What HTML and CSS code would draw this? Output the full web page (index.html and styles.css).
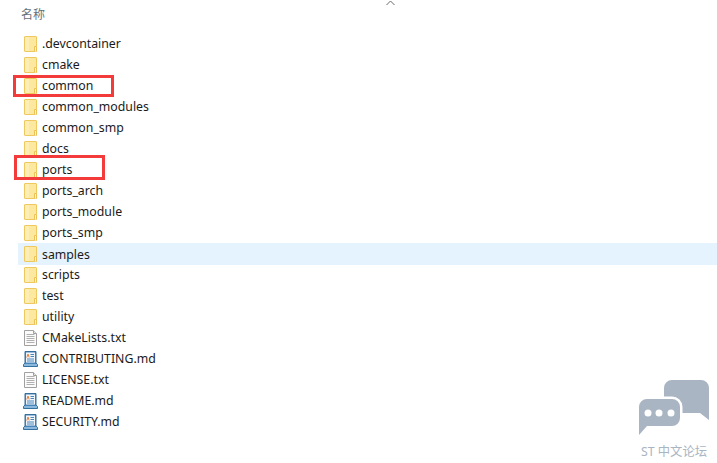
FILE: index.html
```
<!DOCTYPE html>
<html lang="zh">
<head>
<meta charset="utf-8">
<title>名称</title>
<link rel="stylesheet" href="styles.css">
</head>
<body>
<svg width="0" height="0" class="defs">
  <defs>
    <symbol id="folder" viewBox="0 0 13 16">
      <rect x=".5" y=".5" width="12" height="15" rx=".5" fill="#fde89f" stroke="#efc860"/>
      <rect x="1" y="1" width="4" height="14" fill="#fdeeb6"/>
      <path d="M10.500 15.500v-5h2v5" fill="#fff6d2" stroke="#ecc258"/>
    </symbol>
    <symbol id="txt" viewBox="0 0 13 16">
      <path d="M.5.500h9l3 3v12h-12z" fill="#fbfbfb" stroke="#a0a0a0"/>
      <path d="M9.500.500v3h3" fill="#e6e6e6" stroke="#a0a0a0"/>
      <path d="M2.500 4.500h8M2.500 6.500h8M2.500 8.500h8M2.500 10.500h8M2.500 12.500h8" stroke="#b0b0b0"/>
    </symbol>
    <symbol id="md" viewBox="0 0 15 16">
      <path d="M.5 13.500l1.500-1.500v-11.500h11v11.500l1.500 1.500v2h-14z" fill="#4a86ba" stroke="#33709f"/>
      <rect x="3" y="1.500" width="9" height="10" fill="#f1f6fb"/>
      <path d="M3.800 6.500l1.200-3.500 1.200 3.500" fill="none" stroke="#e8843c"/>
      <path d="M7.500 3.500h3.500M7.500 5.500h3.500M4 8h7M4 10h7" stroke="#4a86ba"/>
      <rect x="1" y="13" width="13" height="2" fill="#8ab8dc"/>
    </symbol>
  </defs>
</svg>

<main class="explorer">
  <svg class="sort-caret" width="9" height="6" viewBox="0 0 9 6"><path d="M.5 5L4.500 1l4 4" fill="none" stroke="#6b6b6b"/></svg>
  <header class="column-head">名称</header>
  <ul class="file-list">
    <li class="row"><svg class="icon"><use href="#folder"/></svg><span>.devcontainer</span></li>
    <li class="row"><svg class="icon"><use href="#folder"/></svg><span>cmake</span></li>
    <li class="row"><svg class="icon"><use href="#folder"/></svg><span>common</span><i class="mark mark-common"></i></li>
    <li class="row"><svg class="icon"><use href="#folder"/></svg><span>common_modules</span></li>
    <li class="row"><svg class="icon"><use href="#folder"/></svg><span>common_smp</span></li>
    <li class="row"><svg class="icon"><use href="#folder"/></svg><span>docs</span></li>
    <li class="row"><svg class="icon"><use href="#folder"/></svg><span>ports</span><i class="mark mark-ports"></i></li>
    <li class="row"><svg class="icon"><use href="#folder"/></svg><span>ports_arch</span></li>
    <li class="row"><svg class="icon"><use href="#folder"/></svg><span>ports_module</span></li>
    <li class="row"><svg class="icon"><use href="#folder"/></svg><span>ports_smp</span></li>
    <li class="row selected"><svg class="icon"><use href="#folder"/></svg><span>samples</span></li>
    <li class="row"><svg class="icon"><use href="#folder"/></svg><span>scripts</span></li>
    <li class="row"><svg class="icon"><use href="#folder"/></svg><span>test</span></li>
    <li class="row"><svg class="icon"><use href="#folder"/></svg><span>utility</span></li>
    <li class="row"><svg class="icon"><use href="#txt"/></svg><span>CMakeLists.txt</span></li>
    <li class="row"><svg class="icon icon-wide"><use href="#md"/></svg><span>CONTRIBUTING.md</span></li>
    <li class="row"><svg class="icon"><use href="#txt"/></svg><span>LICENSE.txt</span></li>
    <li class="row"><svg class="icon icon-wide"><use href="#md"/></svg><span>README.md</span></li>
    <li class="row"><svg class="icon icon-wide"><use href="#md"/></svg><span>SECURITY.md</span></li>
  </ul>
  <aside class="watermark">
    <svg width="74" height="62" viewBox="0 0 74 62">
      <path d="M34 0h29a8 8 0 0 1 8 8v32l-9-7h-28a8 8 0 0 1-8-8v-17a8 8 0 0 1 8-8z" fill="#a9b5c3"/>
      <path d="M9 19h25a8 8 0 0 1 8 8v11a8 8 0 0 1-8 8h-25l-8 9v-28a8 8 0 0 1 8-8z" fill="#a9b5c3" stroke="#fff" stroke-width="5" paint-order="stroke"/>
      <circle cx="10" cy="33" r="3.500" fill="#fff"/><circle cx="21" cy="33" r="3.500" fill="#fff"/><circle cx="33" cy="33" r="3.500" fill="#fff"/>
    </svg>
    <span>ST 中文论坛</span>
  </aside>
</main>
</body>
</html>
```
FILE: styles.css
```
* { box-sizing: border-box; }
html, body { margin: 0; padding: 0; background: #fff; }
.defs { position: absolute; }
.explorer {
  position: relative;
  width: 717px;
  height: 463px;
  overflow: hidden;
  font-family: "Noto Sans", "Noto Sans CJK SC", sans-serif;
  color: #1a1a1a;
}
.sort-caret { position: absolute; left: 386px; top: 0; }
.column-head {
  height: 33px;
  padding: 6px 0 0 21px;
  font-size: 12px;
  line-height: 17px;
  color: #66707c;
}
.file-list { list-style: none; margin: 0; padding: 0 0 0 18px; }
.row {
  position: relative;
  display: flex;
  align-items: center;
  height: 21px;
  padding-left: 6px;
  font-size: 12.300px;
}
.row.selected { height: 22px; margin-bottom: -1px; background: #e5f3ff; }
.icon { width: 13px; height: 16px; margin-right: 5px; flex: none; }
.icon-wide { width: 15px; margin: 0 4px 0 -1px; }
.mark { position: absolute; border: 3px solid #f33b3b; }
.mark-common { left: -5px; top: 0; width: 101px; height: 22px; }
.mark-ports { left: -4px; top: -4px; width: 91px; height: 25px; }
.watermark {
  position: absolute;
  left: 638px;
  top: 380px;
  width: 74px;
  font-size: 12.300px;
  line-height: 16px;
  color: #a9b5c3;
  white-space: nowrap;
}
.watermark svg { display: block; }
.watermark span { display: block; margin: 2px 0 0 3px; }
```
